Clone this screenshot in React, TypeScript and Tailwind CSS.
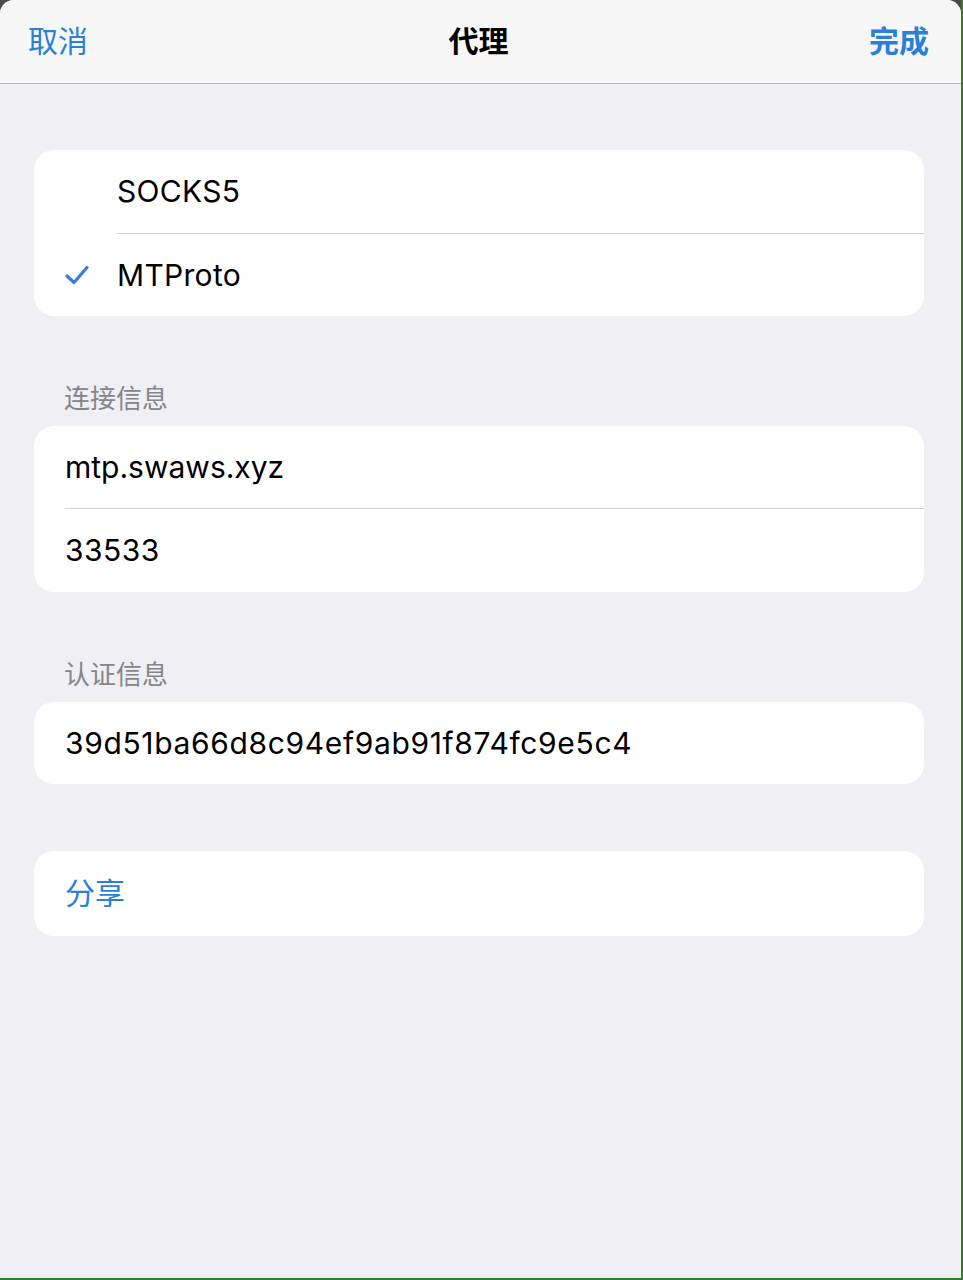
const FONT = "font-['Inter','Noto_Sans_CJK_SC',sans-serif]";

function Check() {
  return (
    <svg width="24" height="20" viewBox="0 0 24 20" fill="none">
      <path d="M2 11l7 6.5L22 2.5" stroke="#3b7be0" strokeWidth="3.2" strokeLinecap="round" strokeLinejoin="round" />
    </svg>
  );
}

function SectionLabel({ children }: { children: string }) {
  return <div className="px-[64px] pb-[12px] text-[26px] leading-[30px] text-[#85858b]">{children}</div>;
}

export default function App() {
  return (
    <div className={`${FONT} h-[1280px] w-[963px] border-r-2 border-b-2 border-[#2f7d2f] bg-[#4a4a4a]`}>
      <div className="flex h-full flex-col overflow-hidden rounded-t-[14px] bg-[#efeff4]">
        <header className="flex h-[84px] shrink-0 items-center justify-between border-b border-[#b6b6ba] bg-[#f7f7f7] pl-[28px] pr-[32px]">
          <span className="w-[120px] text-[30px] text-[#2a7fd6]">取消</span>
          <span className="text-[30px] font-bold text-black">代理</span>
          <span className="w-[120px] text-right text-[30px] font-semibold text-[#2a7fd6]">完成</span>
        </header>

        <div className="ml-[34px] mr-[37px] mt-[66px] overflow-hidden rounded-[20px] bg-white">
          <div className="flex h-[83px] items-center pl-[83px] text-[30px] tracking-[0.3px] text-black">SOCKS5</div>
          <div className="ml-[83px] h-px bg-[#d0d0d4]" />
          <div className="flex h-[82px] items-center">
            <div className="flex w-[83px] items-center justify-center pl-[2px]">
              <Check />
            </div>
            <span className="text-[30px] tracking-[0.3px] text-black">MTProto</span>
          </div>
        </div>

        <div className="mt-[68px]">
          <SectionLabel>连接信息</SectionLabel>
          <div className="ml-[34px] mr-[37px] overflow-hidden rounded-[20px] bg-white">
            <div className="flex h-[82px] items-center pl-[31px] text-[30px] text-black">mtp.swaws.xyz</div>
            <div className="ml-[31px] h-px bg-[#d0d0d4]" />
            <div className="flex h-[83px] items-center pl-[31px] text-[30px] tracking-[0.5px] text-black">33533</div>
          </div>
        </div>

        <div className="mt-[68px]">
          <SectionLabel>认证信息</SectionLabel>
          <div className="ml-[34px] mr-[37px] flex h-[82px] items-center rounded-[20px] bg-white pl-[31px] text-[30px] tracking-[0.65px] text-black">
            39d51ba66d8c94ef9ab91f874fc9e5c4
          </div>
        </div>

        <div className="ml-[34px] mr-[37px] mt-[67px] flex h-[85px] items-center rounded-[20px] bg-white pl-[31px] text-[30px] text-[#2a7fd6]">
          分享
        </div>
      </div>
    </div>
  );
}
